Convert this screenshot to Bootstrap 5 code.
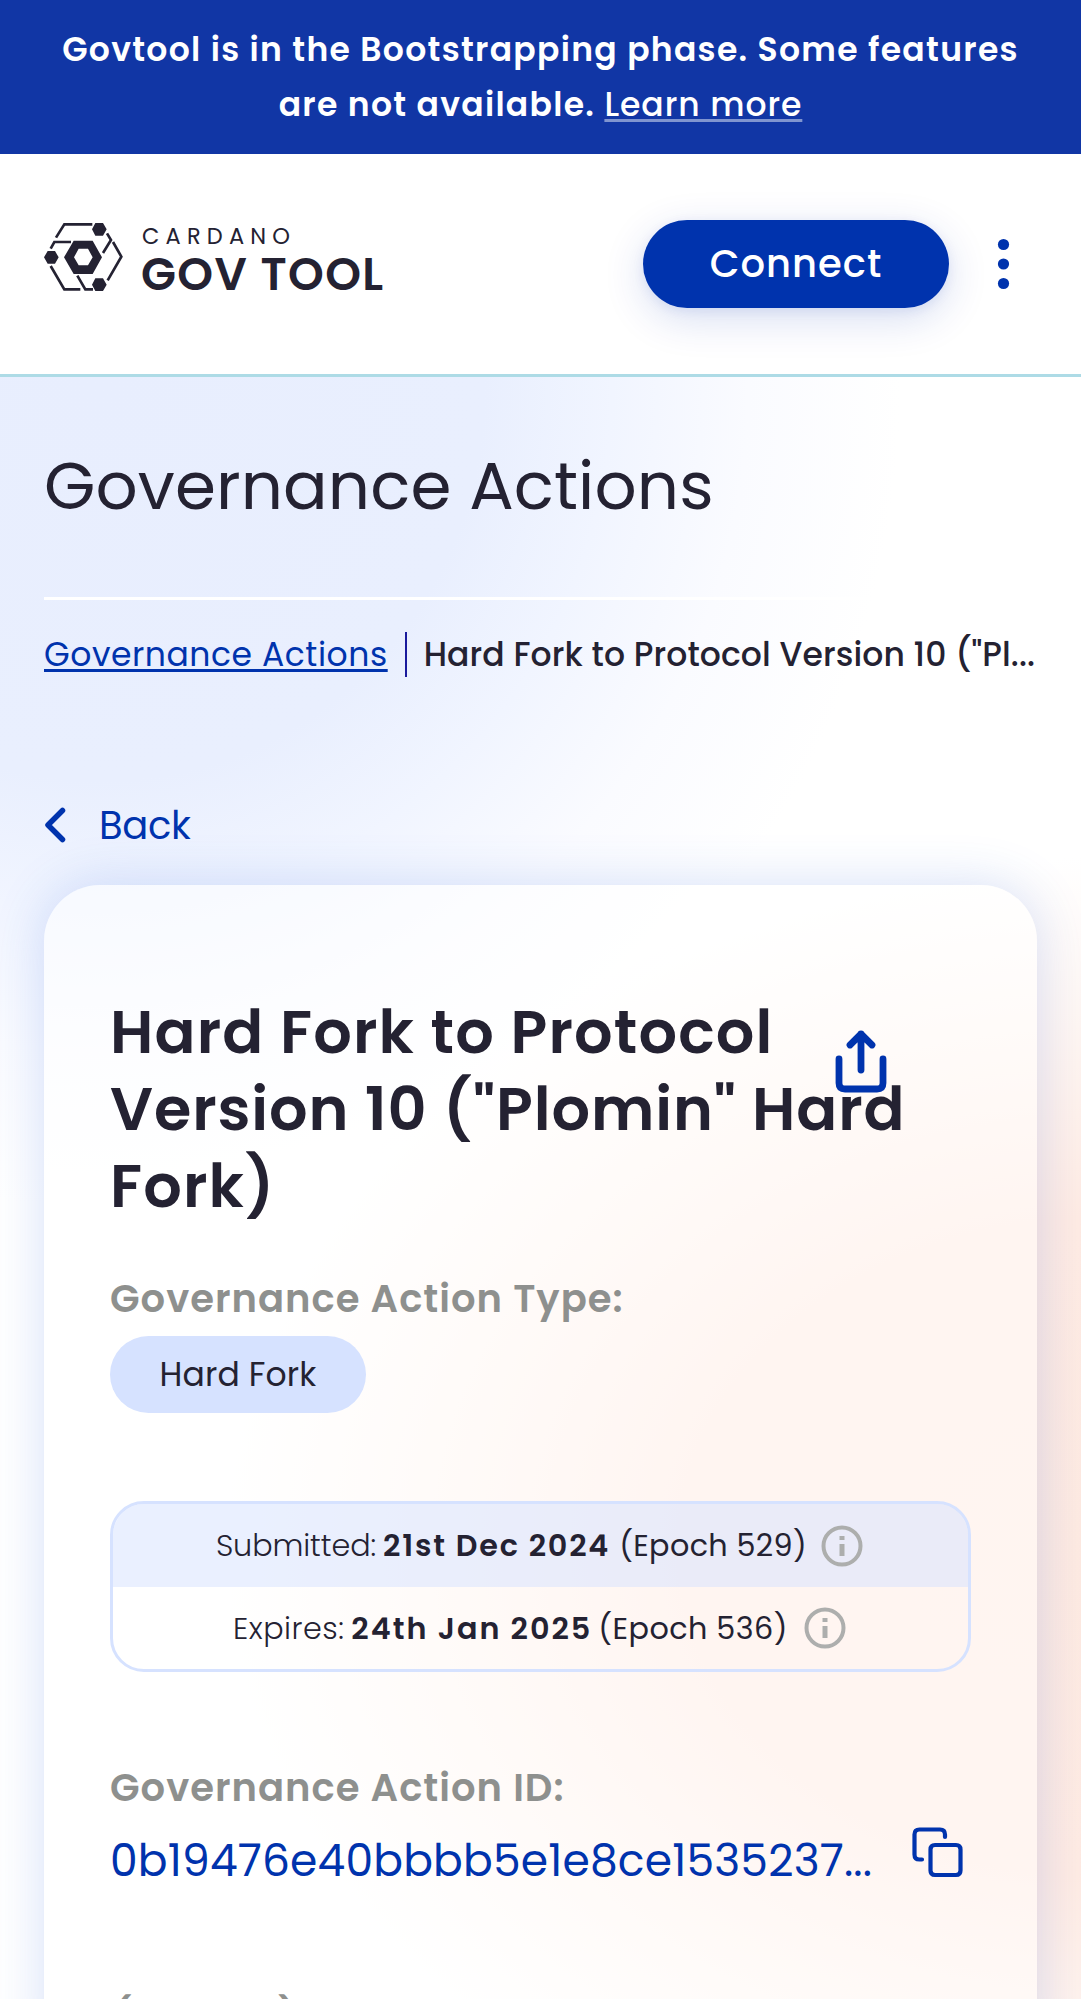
<!DOCTYPE html>
<html lang="en">
<head>
<meta charset="utf-8">
<meta name="viewport" content="width=device-width, initial-scale=1">
<title>Cardano GovTool</title>
<link href="https://cdn.jsdelivr.net/npm/bootstrap@5.3.0/dist/css/bootstrap.min.css" rel="stylesheet">
<style>
:root{--ink:#242232;--brand:#0033ad;--muted:#8e908e}
html,body{height:1999px;overflow:hidden}
body{font-family:Poppins,Inter,"Noto Sans",sans-serif;font-feature-settings:"cv11";color:var(--ink);background:#fff}
.w-light{font-weight:300}
.w-medium{font-weight:500}
.w-semi{font-weight:600}
.phase-banner{height:154px;padding-top:22px;background:#1136a5;font-size:33px;line-height:55px;letter-spacing:1.3px}
.phase-banner a{letter-spacing:.95px;text-decoration-color:#8095d0;text-decoration-thickness:3px;text-underline-offset:3px}
.site-header{height:223px;padding:0 71px 0 40px;border-bottom:3px solid #addbe6}
.brand-logo{margin-bottom:13px}
.brand-text{padding:9px 0 0 11px}
.brand-top{font-size:22.5px;line-height:24px;letter-spacing:6.2px;padding-left:1px}
.brand-main{font-size:45.5px;line-height:46px;letter-spacing:1.4px;margin-top:3px}
.btn-connect{width:306px;height:88px;background:var(--brand);font-size:38.5px;letter-spacing:1px;box-shadow:0 11px 41px rgba(0,51,173,.16),0 3px 12px rgba(0,51,173,.08)}
.menu-dots{margin-left:48px}
main{height:1700px;padding:69px 44px 0;background:
 radial-gradient(ellipse 800px 820px at 100px 10px,#e8eefe 0%,#e9effe 48%,#f1f5ff 64%,#fafbff 81%,rgba(255,255,255,0) 100%),
 radial-gradient(ellipse 900px 690px at 1110px 1170px,#feeae1 0%,#ffebe3 48%,#fff4ef 70%,rgba(255,255,255,0) 100%)}
.page-title{font-size:66px;line-height:80px;letter-spacing:.12px}
.title-rule{height:3px;margin-top:71px;background:#fff}
.crumbs{height:45px;margin-top:32px;font-size:33px;line-height:46px}
.crumbs a{color:var(--brand);letter-spacing:.55px;text-decoration-thickness:3px;text-underline-offset:3px}
.crumb-bar{flex:none;width:2px;height:45px;margin:0 17px;background:#1a1a9c}
.crumb-here{letter-spacing:.1px}
.back-link{height:46px;margin-top:125px;font-size:38.5px;line-height:46px;letter-spacing:-.3px;color:var(--brand)}
.back-link span{padding-top:1px}
.back-link svg{margin-right:32px}
.action-card{height:1200px;margin-top:37px;padding:108px 66px 0;border-radius:56px;background:rgba(255,255,255,.5);box-shadow:0 0 52px rgba(47,98,220,.2)}
.action-title{font-size:60.5px;line-height:77px;letter-spacing:1.15px}
.title-second{letter-spacing:.9px}
.share-icon{left:720px;top:35px}
.field-label{font-size:38.5px;line-height:46px;color:var(--muted);letter-spacing:1px}
.type-pill{width:256px;height:77px;margin-top:14px;background:#d6e2ff;font-size:33px;letter-spacing:.15px}
.dates-box{height:171px;margin-top:88px;border:3px solid #d6e2ff;border-radius:34px;font-size:30.25px}
.date-row{flex:1 1 0;padding:1px 2px 0 0}
.date-row svg{margin-left:14px}
.row-submitted{background:rgba(214,226,255,.5)}
.action-id{height:60px;margin-top:20px;color:var(--brand)}
.id-value{font-size:44px;line-height:60px;letter-spacing:.18px}
</style>
<script src="https://cdn.jsdelivr.net/npm/bootstrap@5.3.0/dist/js/bootstrap.bundle.min.js"></script>
</head>
<body>
<div class="phase-banner text-white text-center text-nowrap w-semi">Govtool is in the Bootstrapping phase. Some features<br>are not available. <a href="#" class="text-white w-medium">Learn more</a></div>

<header class="site-header d-flex align-items-center bg-white">
  <div class="brand-logo d-flex align-items-start">
    <svg width="90" height="85" viewBox="0 0 270 255" fill="none" stroke="#242232" stroke-width="8">
      <path d="M48 68 73 28H157M32 101 43 81H93M32 153 73 223H121M112 182 136 223H159M201 55 213 75 189 114M219 81 244 125 203 196"/>
      <g fill="#242232" stroke="none">
        <path fill-rule="evenodd" d="M101 77H158L186 127 158 177H101L72 127ZM116 101 102 127 116 151H144L158 127 144 101Z"/>
        <path d="M166 24H189L200 43 189 62H166L156 43ZM23 108H45L56 127 45 146H23L12 127ZM166 190H189L200 209 189 228H166L156 209Z"/>
      </g>
    </svg>
    <div class="brand-text text-nowrap">
      <div class="brand-top">CARDANO</div>
      <div class="brand-main w-semi">GOV TOOL</div>
    </div>
  </div>
  <button class="btn btn-connect rounded-pill text-white w-medium ms-auto p-0">Connect</button>
  <svg class="menu-dots" width="13" height="52" viewBox="0 0 13 52" fill="#0033ad"><circle cx="6.5" cy="6.5" r="5.6"/><circle cx="6.5" cy="26" r="5.6"/><circle cx="6.5" cy="45.5" r="5.6"/></svg>
</header>

<main>
  <h1 class="page-title fw-normal m-0">Governance Actions</h1>
  <div class="title-rule"></div>
  <nav class="crumbs d-flex text-nowrap">
    <a href="#">Governance Actions</a>
    <div class="crumb-bar"></div>
    <span class="crumb-here w-medium">Hard Fork to Protocol Version 10 ("Pl...</span>
  </nav>
  <a href="#" class="back-link d-flex align-items-center text-decoration-none">
    <svg width="23" height="36" viewBox="0 0 23 36" fill="none" stroke="#0033ad" stroke-width="5.500" stroke-linecap="round" stroke-linejoin="round"><path d="M18.500 3.500 4 18 18.500 32.500"/></svg>
    <span>Back</span>
  </a>

  <section class="action-card">
    <div class="position-relative">
      <h2 class="action-title w-semi text-nowrap m-0">Hard Fork to Protocol<br><span class="title-second">Version 10 ("Plomin" Hard</span><br>Fork)</h2>
      <svg class="share-icon position-absolute" width="60" height="68" viewBox="0 0 60 68" fill="none" stroke="#0033ad" stroke-width="6.800" stroke-linecap="round" stroke-linejoin="round"><path d="M9 31V55Q9 61 15 61H47Q53 61 53 55V31M31 42V6M20 17 31 6 42 17"/></svg>
    </div>
    <div class="field-label w-semi" style="margin-top:52px">Governance Action Type:</div>
    <div class="type-pill rounded-pill d-flex align-items-center justify-content-center">Hard Fork</div>

    <div class="dates-box d-flex flex-column overflow-hidden text-nowrap">
      <div class="date-row row-submitted d-flex align-items-center justify-content-center">
        <span class="w-light" style="letter-spacing:-.1px;margin-right:7px">Submitted:</span>
        <span class="w-semi" style="letter-spacing:1.8px;margin-right:9px">21st Dec 2024</span>
        <span style="letter-spacing:.350px">(Epoch 529)</span>
        <svg width="42" height="42" viewBox="0 0 42 42" fill="#adaead"><circle cx="21" cy="21" r="18.500" fill="none" stroke="#adaead" stroke-width="4"/><path d="M18.500 11H23.500V15H18.500ZM18.500 19H23.500V31H18.500Z"/></svg>
      </div>
      <div class="date-row d-flex align-items-center justify-content-center">
        <span class="w-light" style="letter-spacing:.5px;margin-right:7px">Expires:</span>
        <span class="w-semi" style="letter-spacing:2px;margin-right:6px">24th Jan 2025</span>
        <span style="letter-spacing:.450px">(Epoch 536)</span>
        <svg width="42" height="42" viewBox="0 0 42 42" fill="#adaead" style="margin-left:16px"><circle cx="21" cy="21" r="18.500" fill="none" stroke="#adaead" stroke-width="4"/><path d="M18.500 11H23.500V15H18.500ZM18.500 19H23.500V31H18.500Z"/></svg>
      </div>
    </div>

    <div class="field-label w-semi" style="margin-top:93px">Governance Action ID:</div>
    <div class="action-id d-flex align-items-center justify-content-between">
      <span class="id-value">0b19476e40bbbb5e1e8ce1535237...</span>
      <svg width="60" height="70" viewBox="0 0 60 70" fill="none" stroke="#0033ad" stroke-width="4.200" stroke-linecap="round" stroke-linejoin="round"><path d="M24 19H45Q49.500 19 49.500 23.500V44.500Q49.500 49 45 49H24Q19.500 49 19.500 44.500V23.500Q19.500 19 24 19ZM11 33.500H8.500Q3.500 33.500 3.500 28.500V8.500Q3.500 3.500 8.500 3.500H29Q34 3.500 34 8.500V11"/></svg>
    </div>
    <div class="field-label w-semi" style="margin-top:103px;padding-left:3px;letter-spacing:0">(CIP-129) Governance Action ID:</div>
  </section>
</main>
</body>
</html>
